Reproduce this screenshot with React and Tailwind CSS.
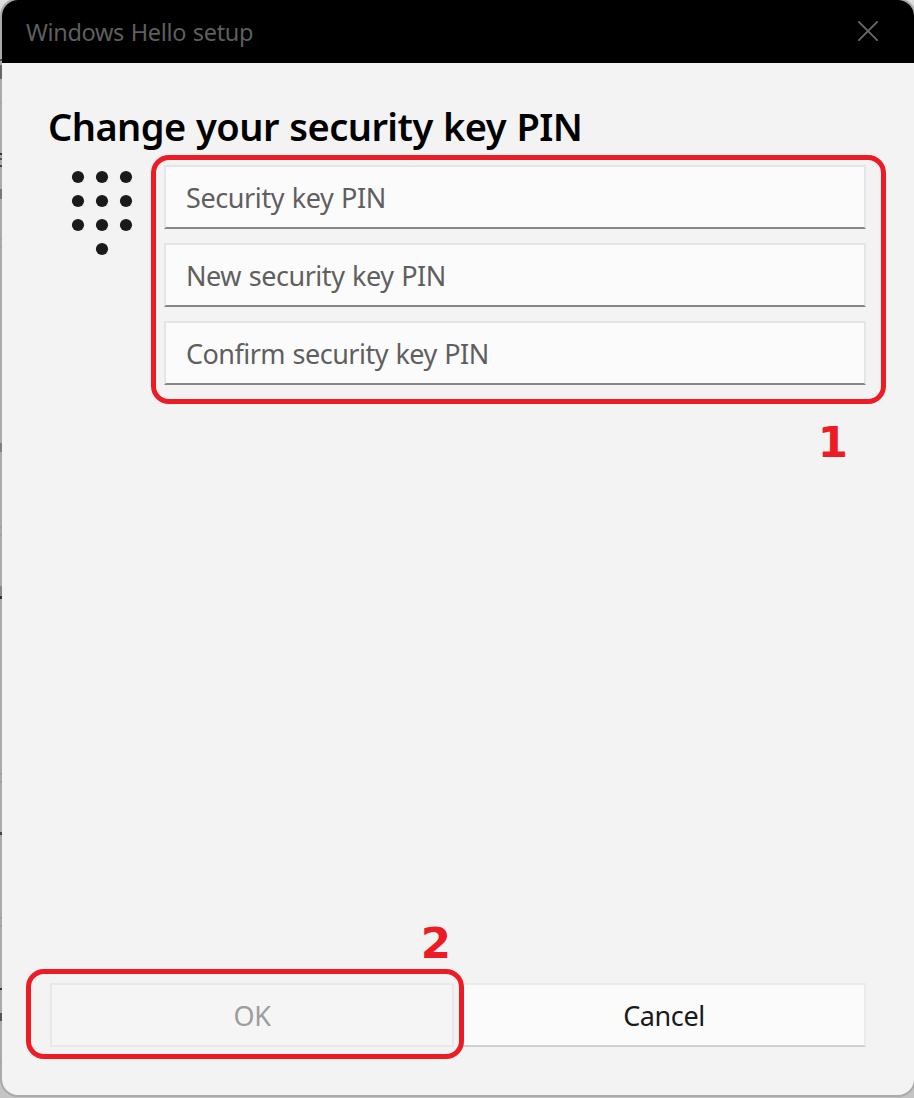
import { useState } from 'react'

const FIELDS = [
  { id: 'current', label: 'Security key PIN', style: 'tracking-[-0.4px]' },
  { id: 'next', label: 'New security key PIN', style: 'tracking-[-0.45px]' },
  { id: 'confirm', label: 'Confirm security key PIN', style: 'tracking-[-0.52px]' }
]

const DOTS = [
  [6, 6], [30, 6], [54, 6],
  [6, 30], [30, 30], [54, 30],
  [6, 54], [30, 54], [54, 54],
  [30, 78]
]

// Slivers of the page behind the dialog
const SLIVERS = [
  'top-[59px] h-[2px] bg-[#555]',
  'top-[65px] h-[14px] bg-[#666]',
  'top-[102px] h-[2px] bg-[#a5a5a5]',
  'top-[153px] h-[2px] bg-[#333]',
  'top-[158px] h-[2px] bg-[#555]',
  'top-[165px] h-[2px] bg-[#444]',
  'top-[189px] h-[10px] bg-[#777]',
  'top-[238px] h-[2px] bg-[#a5a5a5]',
  'top-[246px] h-[2px] bg-[#a5a5a5]',
  'top-[443px] h-[9px] bg-[#808080]',
  'top-[526px] h-[2px] bg-[#a0a0a0]',
  'top-[534px] h-[2px] bg-[#a0a0a0]',
  'top-[586px] h-[10px] bg-[#888]',
  'top-[596px] h-[3px] bg-[#333]',
  'top-[773px] h-[2px] bg-[#a0a0a0]',
  'top-[781px] h-[2px] bg-[#a0a0a0]',
  'top-[832px] h-[3px] bg-[#444]',
  'top-[917px] h-[2px] bg-[#a0a0a0]',
  'top-[925px] h-[2px] bg-[#a0a0a0]',
  'top-[988px] h-[2px] bg-[#333]',
  'top-[1013px] h-[8px] bg-[#555]',
  'top-[1061px] h-[2px] bg-[#a5a5a5]'
]

function KeypadIcon() {
  return (
    <svg width="60" height="84" viewBox="0 0 60 84" fill="#1a1a1a" className="overflow-visible">
      {DOTS.map(([cx, cy]) => (
        <circle key={`${cx}-${cy}`} cx={cx} cy={cy} r="6.1" />
      ))}
    </svg>
  )
}

function PinField({ field, value, onChange }) {
  return (
    <input
      type="text"
      value={value}
      onChange={(e) => onChange(field.id, e.target.value)}
      placeholder={field.label}
      className={`block h-16 w-full border-2 border-[#e5e5e5] border-b-[#868686] bg-[#fbfbfb] px-5 text-[27px] [word-spacing:1px] text-black outline-none placeholder:text-[#5f5f5f] ${field.style}`}
    />
  )
}

export default function App() {
  const [pins, setPins] = useState({ current: '', next: '', confirm: '' })

  const handleChange = (id, value) => {
    setPins((prev) => ({ ...prev, [id]: value }))
  }

  return (
    <div className="relative h-[1098px] w-[914px] overflow-hidden bg-linear-to-b from-[#e0e0e0] from-0% via-[#b0b0b0] via-5% to-[#c4c4c4] pl-0.5 font-['Noto_Sans','Open_Sans',sans-serif]">
      {/* Dialog */}
      <div className="relative flex h-[1095px] w-[912px] flex-col overflow-hidden rounded-2xl bg-[#f3f3f3] shadow-[0_0_0_2px_#aaaaaa]">
        {/* Title bar */}
        <div className="flex h-[63px] shrink-0 items-center justify-between bg-black pr-9 pl-6">
          <span className="pt-0.5 text-[23.5px] tracking-[-0.34px] [word-spacing:1px] whitespace-nowrap text-[#5e5e5e]">
            Windows Hello setup
          </span>
          <svg width="20" height="20" viewBox="0 0 20 20" fill="none" stroke="#6b6b6b" strokeWidth="1.8" className="mb-0.5">
            <path d="M0.3 0.3 19.7 19.7M19.7 0.3 0.3 19.7" />
          </svg>
        </div>

        <h1 className="mt-9 ml-[46px] h-[54px] text-[38px] leading-[54px] font-semibold tracking-[-0.54px] [word-spacing:1px] whitespace-nowrap text-black">
          Change your security key PIN
        </h1>

        {/* PIN fields */}
        <div className="mt-3 flex pr-12 pl-[70px]">
          <div className="w-[92px] shrink-0 pt-1.5">
            <KeypadIcon />
          </div>
          <div className="relative flex flex-1 flex-col gap-3.5">
            {FIELDS.map((field) => (
              <PinField key={field.id} field={field} value={pins[field.id]} onChange={handleChange} />
            ))}
            <div className="pointer-events-none absolute -top-2.5 -right-5 -bottom-[19px] -left-[13px] rounded-[18px] border-5 border-[#ed1c24]" />
            <span className="absolute top-[251px] right-[18px] font-['DejaVu_Sans'] text-[43.5px] leading-[52px] font-bold text-[#ed1c24]">
              1
            </span>
          </div>
        </div>

        {/* Actions */}
        <div className="mt-auto mb-12 grid grid-cols-2 gap-2 pr-12 pl-12">
          <div className="relative">
            <button
              disabled
              className="flex h-16 w-full items-center justify-center border-2 border-[#e8e8e8] bg-[#f5f5f5] pt-0.5 text-[27px] tracking-[-0.3px] text-[#9d9d9d]"
            >
              OK
            </button>
            <div className="pointer-events-none absolute -top-3.5 -right-2.5 -bottom-3 -left-6 rounded-[18px] border-5 border-[#ed1c24]" />
            <span className="absolute -top-[66px] right-[3px] font-['DejaVu_Sans'] text-[43.5px] leading-[52px] font-bold text-[#ed1c24]">
              2
            </span>
          </div>
          <button className="flex h-16 items-center justify-center border-2 border-[#ebebeb] border-b-[#d0d0d0] bg-[#fbfbfb] pt-0.5 text-[27px] tracking-[-0.4px] text-[#1a1a1a]">
            Cancel
          </button>
        </div>
      </div>

      {SLIVERS.map((sliver) => (
        <div key={sliver} className={`absolute left-0 w-0.5 ${sliver}`} />
      ))}
    </div>
  )
}
